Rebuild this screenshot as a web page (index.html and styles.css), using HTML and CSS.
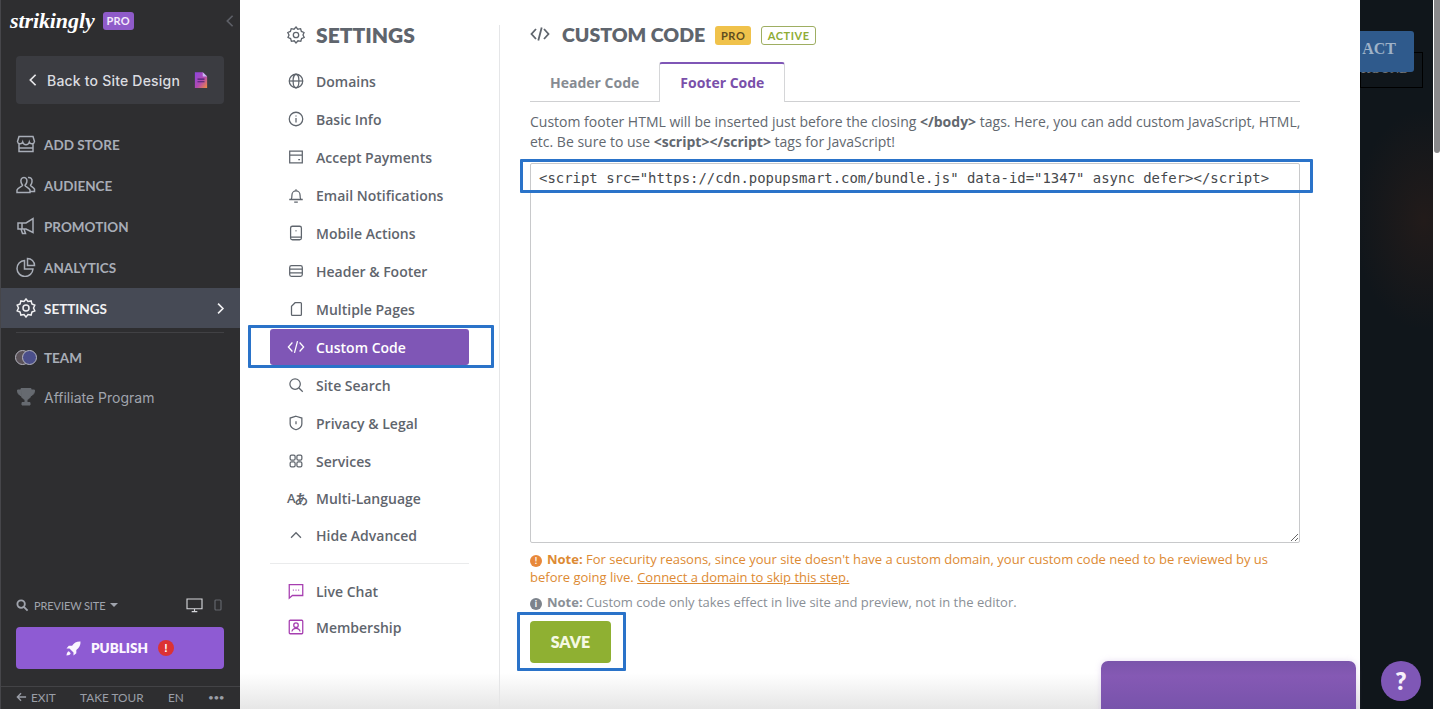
FILE: index.html
```html
<!DOCTYPE html>
<html lang="en">
<head>
<meta charset="utf-8">
<title>Strikingly Settings - Custom Code</title>
<link rel="stylesheet" href="styles.css">
</head>
<body>
<div class="page">
  <aside class="sidebar">
    <div class="brand">
      <span class="logo">strikingly</span>
      <span class="pro-tag">PRO</span>
      <svg class="collapse" viewBox="0 0 10 16"><path d="M8 2 2 8l6 6"/></svg>
    </div>
    <div class="back">
      <svg class="back-arrow" viewBox="0 0 10 16"><path d="M8 2 2 8l6 6"/></svg>
      <span class="back-label">Back to Site Design</span>
      <svg class="back-doc" viewBox="0 0 16 18"><defs><linearGradient id="docg" x1="0" y1="0" x2="1" y2="1"><stop offset="0" stop-color="#8d45e0"/><stop offset=".55" stop-color="#b04ab0"/><stop offset="1" stop-color="#f08a3c"/></linearGradient></defs><path d="M1 0h9l5 5v13H1z" fill="url(#docg)"/><path d="M10 0l5 5h-5z" fill="#c9b8f0"/><path d="M4 8h8M4 11h8" stroke="#4a2370" stroke-width="1.4"/></svg>
    </div>
    <nav class="side-nav">
      <a class="side-row"><svg class="side-ico" viewBox="0 0 20 20"><path d="M3 2.500h14l1.500 5a2.700 2.700 0 0 1-5.200.6 3.400 3.400 0 0 1-6.600 0 2.700 2.700 0 0 1-5.200-.6zM3 10v7.500h14V10M3 14h14"/></svg>ADD STORE</a>
      <a class="side-row"><svg class="side-ico" viewBox="0 0 20 20"><path d="M8 2.500c-2.500 0-3.500 2-3 4.500.3 1.500 1 2.500 1.600 3.200 0 1.300-4.600 2.300-5.600 4.800v2.500h13V15c-.8-2.400-5-3.400-5-4.800.7-.7 1.500-1.800 1.800-3.200.5-2.500-.5-4.500-2.800-4.500zM12 2.500c2.400-.5 4.500 1.200 4 4.500-.2 1.300-.8 2.400-1.500 3.200 0 1 2.800 1.800 4 4v2.300h-4"/></svg>AUDIENCE</a>
      <a class="side-row"><svg class="side-ico" viewBox="0 0 20 20"><path d="M2 7h8l7-4.500v14L10 13H2zM5 13l1.500 4.500h3L8 13M6 7v6"/></svg>PROMOTION</a>
      <a class="side-row"><svg class="side-ico" viewBox="0 0 20 20"><path d="M8.500 3.500a8 8 0 1 0 8.500 8.500H8.500zM11.500 1.500V8.500h7a7 7 0 0 0-7-7z"/></svg>ANALYTICS</a>
      <a class="side-row side-row-active"><svg class="side-ico" viewBox="0 0 20 20"><path d="M10 1l2 2.400 3.100-.5.800 3 2.900 1.300-1.300 2.800 1.300 2.800-2.900 1.300-.8 3-3.100-.5L10 19l-2-2.400-3.100.5-.8-3-2.900-1.300L2.500 10 1.200 7.200l2.900-1.300.8-3 3.100.5z"/><circle cx="10" cy="10" r="3"/></svg>SETTINGS<svg class="side-chevron" viewBox="0 0 10 16"><path d="M2 2l6 6-6 6"/></svg></a>
    </nav>
    <div class="side-divider"></div>
    <a class="side-row side-row-team"><span class="avatars"><span class="avatar avatar-a"></span><span class="avatar avatar-b"></span></span>TEAM</a>
    <a class="side-row side-row-plain"><svg class="side-ico side-ico-fill" viewBox="0 0 20 20"><path d="M5 1.500h10v6a5 5 0 0 1-10 0zM9 12h2v3H9zM6 15.500h8v2.500H6zM5 3H1.500c0 3 1 5 3.700 5.700M15 3h3.500c0 3-1 5-3.700 5.700" /></svg>Affiliate Program</a>
    <div class="side-bottom">
      <div class="preview-row">
        <svg class="preview-search" viewBox="0 0 14 14"><circle cx="5.500" cy="5.500" r="4"/><path d="M8.500 8.500l4 4"/></svg>
        <span class="preview-label">PREVIEW SITE</span>
        <span class="caret"></span>
        <svg class="device-desktop" viewBox="0 0 18 16"><path d="M1 1h16v10.500H1zM6 14.500h6M9 11.500v3"/></svg>
        <svg class="device-mobile" viewBox="0 0 8 12"><rect x="1" y="1" width="6" height="10" rx="1"/></svg>
      </div>
      <button class="publish" type="button">
        <svg class="rocket" viewBox="0 0 16 16"><path d="M15.500.5c-4-.2-7 1.300-9 4.500H3L.5 8h3.200l4.300 4.300V15.500l3-2.500v-3.500c3.200-2 4.700-5 4.500-9.500zM3 11c-1.500.5-2.300 2-2.500 4.500 2.500-.2 4-1 4.500-2.500z"/></svg>
        <span>PUBLISH</span>
        <span class="alert">!</span>
      </button>
      <div class="foot-row">
        <span class="foot-exit"><svg class="foot-arrow" viewBox="0 0 12 10"><path d="M11 5H2M5.500 1 1.500 5l4 4"/></svg>EXIT</span>
        <span>TAKE TOUR</span>
        <span>EN</span>
        <span class="foot-dots">•••</span>
      </div>
    </div>
  </aside>

  <main class="panel">
    <section class="settings-col">
      <h2 class="settings-title"><svg class="title-ico" viewBox="0 0 20 20"><path d="M10 2l1.800 2.200 2.800-.5.800 2.700 2.600 1.100L17 10l1.200 2.500-2.600 1.100-.8 2.700-2.800-.5L10 18l-1.800-2.200-2.800.5-.8-2.700-2.600-1.100L3 10 1.800 7.500l2.600-1.100.8-2.700 2.800.5z"/><circle cx="10" cy="10" r="2.700"/></svg>SETTINGS</h2>
      <ul class="sub-list">
        <li class="sub-row"><svg class="sub-ico" viewBox="0 0 20 20"><circle cx="10" cy="10" r="7.500"/><ellipse cx="10" cy="10" rx="3.200" ry="7.500"/><path d="M2.500 10h15"/></svg>Domains</li>
        <li class="sub-row"><svg class="sub-ico" viewBox="0 0 20 20"><circle cx="10" cy="10" r="7.500"/><path d="M10 9v5M10 6v1.300"/></svg>Basic Info</li>
        <li class="sub-row"><svg class="sub-ico" viewBox="0 0 20 20"><path d="M3 3.500h14v13H3zM3 8h14M12.500 13h2"/></svg>Accept Payments</li>
        <li class="sub-row"><svg class="sub-ico" viewBox="0 0 20 20"><path d="M2.500 15h15M4.500 15c1-1 1-2.500 1-5a4.500 4.500 0 0 1 9 0c0 2.500 0 4 1 5M8 18h4M10 3.500v2"/></svg>Email Notifications</li>
        <li class="sub-row"><svg class="sub-ico" viewBox="0 0 20 20"><rect x="4" y="2.500" width="12" height="15" rx="2"/><path d="M4 14.500h12M9.500 7.500h1"/></svg>Mobile Actions</li>
        <li class="sub-row"><svg class="sub-ico" viewBox="0 0 20 20"><rect x="3" y="4" width="14" height="12" rx="2"/><path d="M3 8h14M3 12h14"/></svg>Header &amp; Footer</li>
        <li class="sub-row"><svg class="sub-ico" viewBox="0 0 20 20"><path d="M9 3h6a1 1 0 0 1 1 1v12a1 1 0 0 1-1 1H6a1 1 0 0 1-1-1V7z"/></svg>Multiple Pages</li>
        <li class="sub-row sub-row-active"><svg class="sub-ico" viewBox="0 0 20 20"><path d="M6 5 1.500 10 6 15M14 5l4.500 5-4.500 5M11.700 3.500 8.300 16.500"/></svg>Custom Code</li>
        <li class="sub-row"><svg class="sub-ico" viewBox="0 0 20 20"><circle cx="9" cy="9" r="5.800"/><path d="M13.300 13.300 17.500 17.500"/></svg>Site Search</li>
        <li class="sub-row"><svg class="sub-ico" viewBox="0 0 20 20"><path d="M10 2.500l6.500 2v6.500c0 3-3 5.300-6.500 6.500-3.500-1.200-6.500-3.500-6.500-6.500V4.500zM10 8v3.500"/></svg>Privacy &amp; Legal</li>
        <li class="sub-row"><svg class="sub-ico" viewBox="0 0 20 20"><rect x="3.500" y="3.500" width="5.500" height="5.500" rx="1.500"/><rect x="11" y="3.500" width="5.500" height="5.500" rx="1.500"/><rect x="3.500" y="11" width="5.500" height="5.500" rx="1.500"/><rect x="11" y="11" width="5.500" height="5.500" rx="1.500"/></svg>Services</li>
        <li class="sub-row sub-row-tight"><span class="lang-ico">Aあ</span>Multi-Language</li>
        <li class="sub-row sub-row-tight"><svg class="sub-ico" viewBox="0 0 20 20"><path d="M4.500 13 10 7.500l5.500 5.500"/></svg>Hide Advanced</li>
      </ul>
      <div class="sub-divider"></div>
      <ul class="sub-list sub-list-apps">
        <li class="sub-row"><svg class="sub-ico sub-ico-pink" viewBox="0 0 20 20"><path d="M2.500 3h15v12H6l-3.500 3zM6.500 9h1M9.500 9h1M12.500 9h1"/></svg>Live Chat</li>
        <li class="sub-row"><svg class="sub-ico sub-ico-pink" viewBox="0 0 20 20"><rect x="2.500" y="2.500" width="15" height="15" rx="1"/><circle cx="10" cy="8" r="2.500"/><path d="M5.500 15c.5-2.500 2.200-3.500 4.500-3.500s4 1 4.500 3.500"/></svg>Membership</li>
      </ul>
    </section>

    <section class="content">
      <header class="content-head">
        <svg class="head-ico" viewBox="0 0 20 20"><path d="M6 5 1.500 10 6 15M14 5l4.500 5-4.500 5M11.700 3.500 8.300 16.500"/></svg>
        <h1 class="content-title">CUSTOM CODE</h1>
        <span class="badge badge-pro">PRO</span>
        <span class="badge badge-active">ACTIVE</span>
      </header>
      <div class="tabs">
        <span class="tab">Header Code</span>
        <span class="tab tab-active">Footer Code</span>
      </div>
      <p class="intro">Custom footer HTML will be inserted just before the closing <b>&lt;/body&gt;</b> tags. Here, you can add custom JavaScript, HTML, etc. Be sure to use <b>&lt;script&gt;&lt;/script&gt;</b> tags for JavaScript!</p>
      <textarea class="code" spellcheck="false">&lt;script src="https://cdn.popupsmart.com/bundle.js" data-id="1347" async defer&gt;&lt;/script&gt;</textarea>
      <p class="note note-warn"><span class="note-dot note-dot-warn">!</span><b>Note:</b> For security reasons, since your site doesn't have a custom domain, your custom code need to be reviewed by us before going live. <a class="note-link">Connect a domain to skip this step.</a></p>
      <p class="note note-info"><span class="note-dot note-dot-info">i</span><b>Note:</b> Custom code only takes effect in live site and preview, not in the editor.</p>
      <button class="save" type="button">SAVE</button>
    </section>
  </main>

  <div class="backdrop">
    <div class="contact-under">ROUND</div>
    <div class="contact-btn">ACT</div>
    <div class="scroll-track"><div class="scroll-thumb"></div></div>
  </div>

  <div class="fade"></div>
  <div class="popup"></div>
  <button class="help" type="button">?</button>
  <div class="mark mark-nav"></div>
  <div class="mark mark-code"></div>
  <div class="mark mark-save"></div>
</div>
</body>
</html>
```
FILE: styles.css
```css
* { box-sizing: border-box; }
html, body { margin: 0; height: 100%; overflow: hidden; }
body { font-family: "Open Sans", sans-serif; color: #5f656d; background: #fff; }
ul { list-style: none; margin: 0; padding: 0; }
button { border: 0; cursor: pointer; }

.page { position: relative; display: flex; width: 1440px; height: 709px; overflow: hidden; }

/* Sidebar */
.sidebar { display: flex; flex-direction: column; flex: 0 0 240px; height: 709px; background: #2e2e30; border-left: 1px solid #46464a; }
.brand { display: flex; align-items: center; height: 40px; padding: 1px 0 0 9px; }
.logo { font-family: "Liberation Serif", serif; font-style: italic; font-weight: 700; font-size: 22px; letter-spacing: -.1px; color: #fff; }
.pro-tag { margin-left: 8px; padding: 0 4px; height: 18px; border-radius: 3px; background: #8f5bc9; color: #f3e9fb; font: 700 11px/18px "Lato", sans-serif; letter-spacing: .2px; }
.collapse { width: 10px; height: 14px; margin-left: auto; margin-right: 5px; fill: none; stroke: #5d5f66; stroke-width: 2; }
.back { display: flex; align-items: center; width: 208px; height: 48px; margin: 16px 0 20px 15px; padding: 0 16px 0 12px; border-radius: 4px; background: #3b3c41; }
.back-arrow { width: 10px; height: 14px; fill: none; stroke: #e6e6e8; stroke-width: 2; }
.back-label { margin-left: 9px; font: 500 14px "Inter", sans-serif; letter-spacing: .2px; color: #dcdde0; white-space: nowrap; }
.back-doc { width: 14px; height: 16px; margin-left: auto; flex: none; }
.side-nav { display: flex; flex-direction: column; gap: 1px; }
.side-row { display: flex; align-items: center; height: 40px; padding: 1px 0 0 15px; font: 700 13.500px "Lato", sans-serif; color: #a8adb7; }
.side-ico { flex: none; width: 20px; height: 20px; margin: -1px 8px 0 0; fill: none; stroke: #a8adb7; stroke-width: 1.500; }
.side-row-active { background: #464a55; color: #f1f1f3; }
.side-row-active .side-ico { stroke: #f1f1f3; }
.side-chevron { width: 9px; height: 13px; margin-left: auto; margin-right: 15px; fill: none; stroke: #f1f1f3; stroke-width: 2; }
.side-divider { width: 208px; height: 1px; margin: 4px 0 4px 15px; background: #414144; }
.side-row-team { padding-left: 14px; }
.avatars { display: flex; width: 23px; margin-right: 6px; }
.avatar { flex: none; width: 15px; height: 15px; border-radius: 50%; border: 1px solid #b5b5c0; }
.avatar-a { background: #5a5258; }
.avatar-b { margin-left: -8px; background: #4b4f8a; }
.side-row-plain { padding-top: 0; font: 400 14px "Inter", sans-serif; color: #a0a4ad; }
.side-ico-fill { fill: #666a70; stroke: #666a70; stroke-width: 1; }
.side-bottom { margin-top: auto; }
.preview-row { display: flex; align-items: center; height: 18px; padding-left: 15px; font: 400 11px "Lato", sans-serif; color: #a0a4ad; }
.preview-search { width: 13px; height: 13px; fill: none; stroke: #a0a4ad; stroke-width: 2; margin-right: 5px; }
.preview-label { letter-spacing: -.1px; }
.caret { width: 0; height: 0; margin-left: 5px; border-left: 4px solid transparent; border-right: 4px solid transparent; border-top: 4px solid #a0a4ad; }
.device-desktop { width: 17px; height: 15px; margin-left: auto; fill: none; stroke: #d5d6da; stroke-width: 1.200; }
.device-mobile { width: 8px; height: 12px; margin: 0 18px 0 11px; fill: none; stroke: #62656b; stroke-width: 1.200; }
.publish { display: flex; align-items: center; justify-content: center; width: 208px; height: 42px; margin: 13px 0 17px 15px; border-radius: 4px; background: #8e5bd3; font: 800 13.500px "Lato", sans-serif; color: #fbf6ff; }
.rocket { width: 15px; height: 15px; margin-right: 10px; fill: #fbf6ff; }
.alert { width: 16px; height: 16px; margin-left: 10px; border-radius: 50%; background: #dc3233; font: 700 12px/16px "Lato", sans-serif; color: #fff; }
.foot-row { display: flex; align-items: center; justify-content: space-between; height: 23px; padding: 0 16px 2px 15px; border-top: 1px solid #434346; font: 400 11.800px "Lato", sans-serif; color: #9a9ea7; }
.foot-exit { display: flex; align-items: center; }
.foot-arrow { width: 11px; height: 10px; margin-right: 4px; fill: none; stroke: #9a9ea7; stroke-width: 1.500; }
.foot-dots { font-size: 10px; letter-spacing: -.5px; }

/* White panel */
.panel { display: flex; flex: 0 0 1120px; height: 709px; background: #fff; }
.settings-col { flex: 0 0 260px; height: 684px; margin-top: 25px; padding: 0 30px; border-right: 1px solid #e5e6e8; }
.settings-title { display: flex; align-items: center; height: 20px; margin: 0 0 18px 16px; font: 800 21px/20px "Lato", sans-serif; color: #5f656d; }
.title-ico { flex: none; width: 20px; height: 20px; margin-right: 10px; fill: none; stroke: currentColor; stroke-width: 1.300; }
.sub-list { display: flex; flex-direction: column; gap: 2px; }
.sub-row { display: flex; align-items: center; height: 36px; padding-left: 17px; border-radius: 3px; font-weight: 600; font-size: 14px; color: #5f656d; white-space: nowrap; }
.sub-ico { flex: none; width: 18px; height: 18px; margin-right: 11px; fill: none; stroke: currentColor; stroke-width: 1.400; }
.sub-ico-pink { color: #a63eb0; }
.sub-row-active { background: #7f56b6; color: #fff; }
.lang-ico { flex: none; width: 18px; margin-right: 11px; font-size: 13px; letter-spacing: -1px; white-space: nowrap; }
.sub-row-tight { margin-top: -1px; }
.sub-divider { height: 1px; margin: 10px 0 9px; background: #eaebec; }
.sub-list-apps { gap: 0; }

.content { display: flex; flex-direction: column; align-items: flex-start; width: 770px; margin-left: 30px; padding-top: 20px; }
.content-head { display: flex; align-items: center; height: 30px; margin-bottom: 12px; }
.head-ico { width: 20px; height: 20px; margin: 0 12px 3px 0; fill: none; stroke: #5f656d; stroke-width: 1.800; }
.content-title { margin: 0 10px 1px 0; font: 800 19.500px "Lato", sans-serif; color: #5f656d; white-space: nowrap; }
.badge { display: inline-block; height: 19px; border-radius: 3px; font: 700 11px/19px "Lato", sans-serif; letter-spacing: .6px; text-align: center; }
.badge-pro { width: 36px; background: #f0c24b; color: #5e4c1f; }
.badge-active { width: 55px; margin-left: 10px; line-height: 17px; border: 1px solid #9eae62; color: #8fac35; }
.tabs { display: flex; width: 770px; height: 40px; border-bottom: 1px solid #cfd0d2; }
.tab { height: 39px; padding: 0 20px; font-weight: 700; font-size: 14px; line-height: 41px; color: #868b92; }
.tab-active { height: 40px; border: 1px solid #d5d6d8; border-bottom: 0; border-top: 2px solid #7f56b6; border-radius: 3px 3px 0 0; background: #fff; line-height: 37px; color: #7a50aa; }
.intro { width: 790px; margin: 10px 0 11px; font-size: 14px; line-height: 20px; color: #62686f; }
.code { display: block; width: 770px; height: 380px; margin: 0; padding: 6px 8px; border: 1px solid #c8c9cb; border-radius: 2px; outline: 0; font: 13.950px/16px "DejaVu Sans Mono", monospace; color: #45484c; background: #fff; resize: vertical; white-space: pre; }
.note { width: 770px; margin: 7px 0 0; font-size: 13px; line-height: 18px; }
.note-warn { color: #dd8a33; }
.note-info { color: #8a8f96; }
.note-link { text-decoration: underline; }
.note-dot { display: inline-block; width: 12px; height: 12px; margin-right: 5px; border-radius: 50%; vertical-align: 0; font: 700 9px/12px "Lato", sans-serif; color: #fff; text-align: center; }
.note-dot-warn { background: #e8883a; }
.note-dot-info { background: #7d838c; }
.save { width: 81px; height: 42px; margin-top: 10px; padding: 0 0 2px; border-radius: 4px; background: #8fb032; font: 800 16px "Lato", sans-serif; color: #f5f9e3; }

/* Page behind the panel */
.backdrop { position: relative; flex: 1; height: 709px; background: radial-gradient(ellipse 70px 110px at 64px 220px, #221b1a 0, #10161b 100%) #10161b; }
.contact-under { position: absolute; top: 52px; left: 0; width: 63px; height: 36px; padding-right: 22px; border: 1px solid #000; font: 700 13px/32px "Liberation Serif", serif; text-align: right; color: #6f7275; }
.contact-btn { position: absolute; top: 31px; left: 0; width: 54px; height: 41px; padding-right: 18px; border-radius: 0 3px 3px 0; background: #2f5a8c; font: 700 16px/36px "Liberation Serif", serif; text-align: right; color: #9eb2c8; }
.scroll-track { position: absolute; top: 0; right: 0; width: 7px; height: 709px; background: #fff; }
.scroll-thumb { width: 6px; height: 153px; margin-left: 1px; border-radius: 0 0 3px 3px; background: #8a8a8c; }

/* Overlays */
.fade { position: absolute; left: 240px; bottom: 0; width: 1120px; height: 36px; background: linear-gradient(#ffffff00, #e6e6e6); pointer-events: none; }
.popup { position: absolute; left: 1101px; top: 661px; width: 255px; height: 60px; border-radius: 7px; background: linear-gradient(#7a55ab, #8559b4 25%, #7351a8); box-shadow: 0 0 6px #b79ad455; }
.help { position: absolute; left: 1381px; top: 661px; width: 40px; height: 40px; padding: 0; border-radius: 50%; background: #7f57b6; font: 800 24px/40px "Lato", sans-serif; color: #f7f0fb; }
.mark { position: absolute; border: 3px solid #2a73c9; border-radius: 1px; pointer-events: none; }
.mark-nav { left: 248px; top: 325px; width: 246px; height: 43px; }
.mark-code { left: 520px; top: 159px; width: 793px; height: 34px; }
.mark-save { left: 517px; top: 612px; width: 109px; height: 59px; }
```
